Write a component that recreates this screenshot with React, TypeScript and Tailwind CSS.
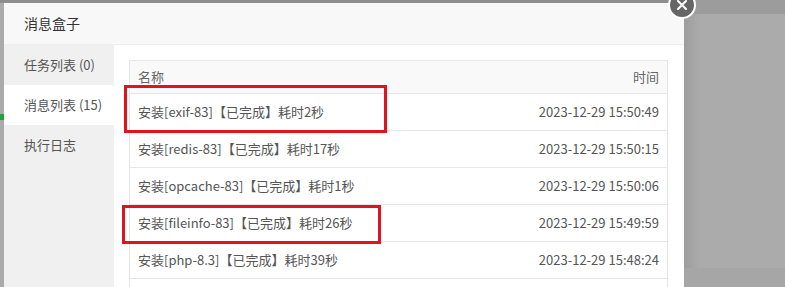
import React from "react";

const rows = [
  { name: "安装[exif-83]【已完成】耗时2秒", time: "2023-12-29 15:50:49" },
  { name: "安装[redis-83]【已完成】耗时17秒", time: "2023-12-29 15:50:15" },
  { name: "安装[opcache-83]【已完成】耗时1秒", time: "2023-12-29 15:50:06" },
  { name: "安装[fileinfo-83]【已完成】耗时26秒", time: "2023-12-29 15:49:59" },
  { name: "安装[php-8.3]【已完成】耗时39秒", time: "2023-12-29 15:48:24" },
  { name: "", time: "" },
];

export default function App() {
  return (
    <div
      className="relative w-[785px] h-[287px] overflow-hidden bg-[#ababab] flex"
      style={{ fontFamily: '"Noto Sans CJK SC", "Noto Sans", sans-serif' }}
    >
      {/* backdrop hints */}
      <div className="absolute left-0 top-0 w-full h-[3px] bg-[#8e8e8e]" />
      <div className="absolute left-[684px] top-0 w-[101px] h-[14px] bg-[#9c9c9c]" />
      <div className="absolute left-[684px] top-[268px] w-[101px] h-[19px] bg-[#a6a6a6]" />
      <div className="absolute left-[684px] top-[14px] w-[16px] h-[254px] bg-gradient-to-r from-[#9d9d9d] to-[#ababab]" />
      <div className="absolute left-0 top-[114px] w-[4px] h-[6px] bg-[#20a53a]" />

      <div className="relative ml-[4px] mt-[3px] w-[680px] h-[300px] bg-white flex flex-col">
        <div className="h-[42px] shrink-0 bg-[#f8f8f8] border-b border-[#eeeeee] flex items-center pl-[20px] text-[14px] text-[#333]">
          消息盒子
        </div>
        <div className="flex flex-1">
          <div className="w-[110px] shrink-0 bg-[#f0f0f0] flex flex-col text-[13px] text-[#555]">
            <div className="h-[40px] flex items-center pl-[20px]">任务列表 (0)</div>
            <div className="h-[40px] flex items-center pl-[20px] bg-white">消息列表 (15)</div>
            <div className="h-[40px] flex items-center pl-[20px]">执行日志</div>
          </div>
          <div className="flex-1 pl-[15px] pr-[16px] pt-[15px]">
            <div className="border border-[#e6e6e6] text-[13px] text-[#555]">
              <div className="h-[33px] flex items-center justify-between px-[8px] bg-[#f9f9f9] border-b border-[#e6e6e6] text-[#666]">
                <span>名称</span>
                <span>时间</span>
              </div>
              {rows.map((r, i) => (
                <div
                  key={i}
                  className="h-[37px] flex items-center justify-between px-[8px] border-b border-[#e6e6e6]"
                >
                  <span>{r.name}</span>
                  <span>{r.time}</span>
                </div>
              ))}
            </div>
          </div>
        </div>
      </div>

      {/* annotation boxes */}
      <div className="absolute left-[124px] top-[85px] w-[263px] h-[48px] border-[3px] border-[#e0141b]" />
      <div className="absolute left-[122px] top-[205px] w-[259px] h-[39px] border-[3px] border-[#e0141b]" />

      {/* close button */}
      <div className="absolute left-[668px] top-[-9px] w-[28px] h-[28px] rounded-full bg-[#666] border-[2px] border-white flex items-center justify-center">
        <svg width="14" height="14" viewBox="0 0 14 14">
          <path d="M3 3 L11 11 M11 3 L3 11" stroke="white" strokeWidth="2" strokeLinecap="round" />
        </svg>
      </div>
    </div>
  );
}
